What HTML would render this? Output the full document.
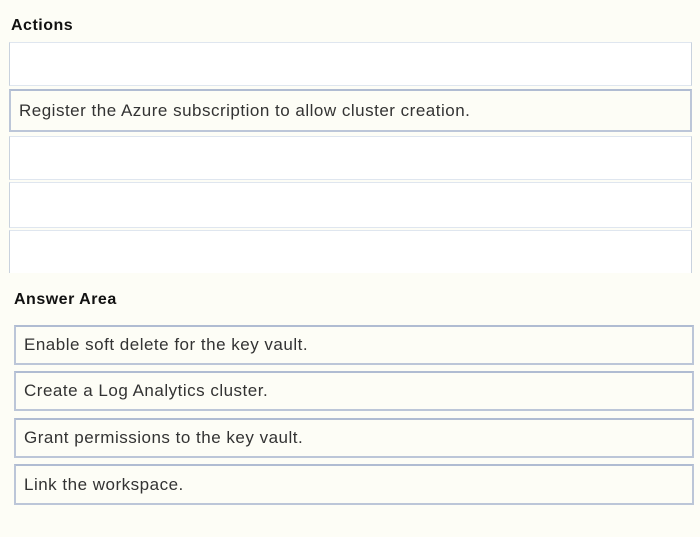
<!DOCTYPE html>
<html><head><meta charset="utf-8"><style>
html,body{margin:0;padding:0;width:700px;height:537px;background:#fdfdf6;overflow:hidden;font-family:"Liberation Sans",sans-serif;}
.h{position:absolute;font-weight:bold;font-size:16px;color:#111;letter-spacing:0.5px;}
.b{position:absolute;box-sizing:border-box;background:#fff;border:1px solid #dfe6ef;border-left-color:#c9d2de;border-right-color:#c9d2de;}
.t{position:absolute;box-sizing:border-box;background:#fdfdf6;border:2px solid #bcc6d8;border-top-color:#b0bcd2;font-size:17px;color:#333;padding-left:8px;display:flex;align-items:center;letter-spacing:0.5px;}
</style></head><body>
<div class="h" style="left:11px;top:17px">Actions</div>
<div class="b" style="left:9px;top:42px;width:683px;height:44px"></div>
<div class="t" style="left:9px;top:89px;width:683px;height:43px">Register the Azure subscription to allow cluster creation.</div>
<div class="b" style="left:9px;top:136px;width:683px;height:44px"></div>
<div class="b" style="left:9px;top:182px;width:683px;height:46px"></div>
<div class="b" style="left:9px;top:230px;width:683px;height:43px;border-bottom:none"></div>
<div class="h" style="left:14px;top:291px">Answer Area</div>
<div class="t" style="left:14px;top:325px;width:680px;height:40px">Enable soft delete for the key vault.</div>
<div class="t" style="left:14px;top:371px;width:680px;height:40px">Create a Log Analytics cluster.</div>
<div class="t" style="left:14px;top:418px;width:680px;height:40px">Grant permissions to the key vault.</div>
<div class="t" style="left:14px;top:464px;width:680px;height:41px">Link the workspace.</div>
</body></html>
